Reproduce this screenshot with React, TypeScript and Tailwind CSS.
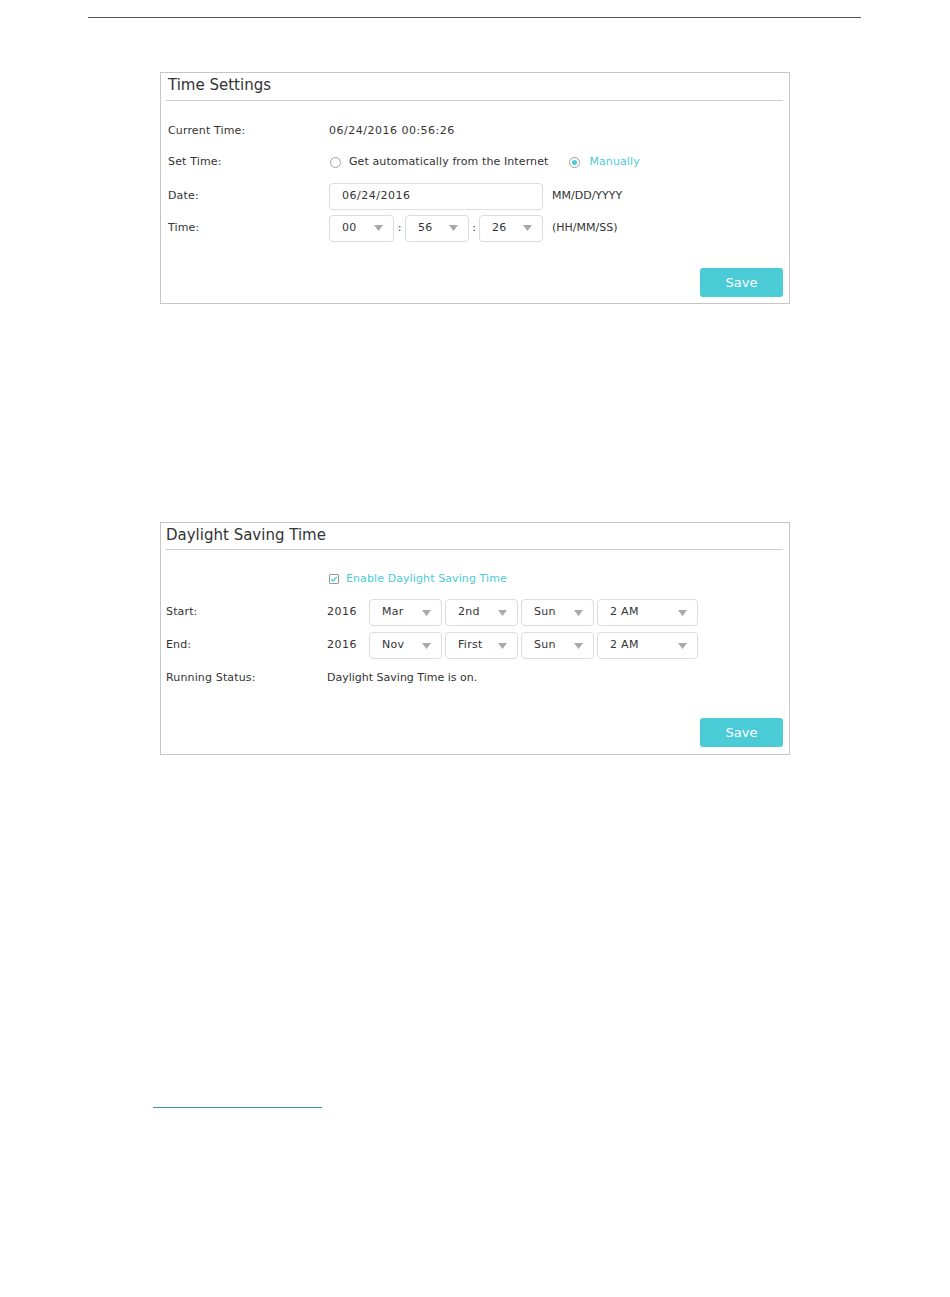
import React from 'react';

const font = { fontFamily: '"DejaVu Sans", Verdana, sans-serif' };

function Arrow() {
  return (
    <svg width="9" height="6" viewBox="0 0 9 6" className="shrink-0">
      <polygon points="0,0 9,0 4.5,6" fill="#a9a9a9" />
    </svg>
  );
}

function Select({ value, width }: { value: string; width: string }) {
  return (
    <div
      className={`flex h-[27px] items-center justify-between rounded-[4px] border border-[#dcdcdc] bg-white pl-[12px] pr-[10px] text-[11px] tracking-[0.3px] text-[#333] ${width}`}
    >
      <span>{value}</span>
      <Arrow />
    </div>
  );
}

function Label({ children }: { children: React.ReactNode }) {
  return <div className="w-[161px] shrink-0 text-[11px] tracking-[0.15px] text-[#333]">{children}</div>;
}

function SaveButton() {
  return (
    <div className="flex justify-end pr-[6px]">
      <button
        type="button"
        className="flex h-[29px] w-[83px] items-center justify-center rounded-[3px] bg-[#4acbd6] text-[13px] text-white"
      >
        Save
      </button>
    </div>
  );
}

function Panel({ title, titleClass, children }: { title: string; titleClass: string; children: React.ReactNode }) {
  return (
    <div className="ml-[160px] flex w-[630px] flex-col border border-[#c6c6c6]">
      <div className={`flex items-center pb-[2px] text-[15px] text-[#333] ${titleClass}`}>{title}</div>
      <div className="ml-[5px] mr-[6px] h-px bg-[#cccccc]" />
      {children}
    </div>
  );
}

export default function App() {
  return (
    <div className="flex min-h-[1297px] w-[950px] flex-col bg-white" style={font}>
      <div className="ml-[88px] mt-[17px] h-[1px] w-[773px] bg-[#555]" />

      <div className="mt-[54px]">
        <Panel title="Time Settings" titleClass="h-[27px] pl-[7px]">
          <div className="flex flex-col pl-[7px]">
            <div className="mt-[20px] flex h-[20px] items-center">
              <Label>Current Time:</Label>
              <span className="text-[11px] tracking-[0.5px] text-[#333]">06/24/2016 00:56:26</span>
            </div>
            <div className="mt-[11px] flex h-[20px] items-center">
              <Label>Set Time:</Label>
              <div className="flex items-center gap-[8px] text-[11px] tracking-[0.1px] text-[#333]">
                <span className="ml-[1px] h-[11px] w-[11px] rounded-full border border-[#a0a0a0]" />
                <span>Get automatically from the Internet</span>
              </div>
              <div className="ml-[21px] flex items-center gap-[9px] text-[11px] tracking-[0.1px] text-[#4acbd6]">
                <span className="flex h-[11px] w-[11px] items-center justify-center rounded-full border border-[#a0a0a0]">
                  <span className="h-[5px] w-[5px] rounded-full bg-[#4acbd6]" />
                </span>
                <span>Manually</span>
              </div>
            </div>
            <div className="mt-[11px] flex h-[26px] items-center">
              <Label>Date:</Label>
              <div className="flex h-[27px] w-[214px] items-center rounded-[4px] border border-[#dcdcdc] pl-[12px] text-[11px] tracking-[0.5px] text-[#333]">
                06/24/2016
              </div>
              <span className="ml-[9px] text-[11px] text-[#333]">MM/DD/YYYY</span>
            </div>
            <div className="mt-[6px] flex h-[26px] items-center">
              <Label>Time:</Label>
              <Select value="00" width="w-[65px]" />
              <span className="w-[11px] text-center text-[11px] text-[#333]">:</span>
              <Select value="56" width="w-[64px]" />
              <span className="w-[10px] text-center text-[11px] text-[#333]">:</span>
              <Select value="26" width="w-[64px]" />
              <span className="ml-[9px] text-[11px] text-[#333]">(HH/MM/SS)</span>
            </div>
          </div>
          <div className="mt-[27px] mb-[6px]">
            <SaveButton />
          </div>
        </Panel>
      </div>

      <div className="mt-[218px]">
        <Panel title="Daylight Saving Time" titleClass="h-[26px] pl-[5px]">
          <div className="flex flex-col pl-[5px]">
            <div className="mt-[19px] flex h-[20px] items-center">
              <div className="w-[163px] shrink-0" />
              <div className="flex items-center gap-[7px] text-[11px] tracking-[0.1px] text-[#4acbd6]">
                <span className="flex h-[10px] w-[10px] items-center justify-center rounded-[1px] border border-[#9a9a9a]">
                  <svg width="8" height="8" viewBox="0 0 8 8">
                    <polyline points="1.2,4.2 3.2,6 6.8,1.8" fill="none" stroke="#4acbd6" strokeWidth="1.3" />
                  </svg>
                </span>
                <span>Enable Daylight Saving Time</span>
              </div>
            </div>
            <div className="mt-[10px] flex h-[27px] items-center">
              <Label>Start:</Label>
              <span className="w-[42px] text-[11px] tracking-[0.5px] text-[#333]">2016</span>
              <div className="flex gap-[3px]">
                <Select value="Mar" width="w-[73px]" />
                <Select value="2nd" width="w-[73px]" />
                <Select value="Sun" width="w-[73px]" />
                <Select value="2 AM" width="w-[101px]" />
              </div>
            </div>
            <div className="mt-[6px] flex h-[27px] items-center">
              <Label>End:</Label>
              <span className="w-[42px] text-[11px] tracking-[0.5px] text-[#333]">2016</span>
              <div className="flex gap-[3px]">
                <Select value="Nov" width="w-[73px]" />
                <Select value="First" width="w-[73px]" />
                <Select value="Sun" width="w-[73px]" />
                <Select value="2 AM" width="w-[101px]" />
              </div>
            </div>
            <div className="mt-[9px] flex h-[20px] items-center">
              <Label>Running Status:</Label>
              <span className="text-[11px] text-[#333]">Daylight Saving Time is on.</span>
            </div>
          </div>
          <div className="mt-[30px] mb-[7px]">
            <SaveButton />
          </div>
        </Panel>
      </div>

      <div className="ml-[153px] mt-[352px] h-[1px] w-[169px] bg-[#3a95a6]" />
    </div>
  );
}
